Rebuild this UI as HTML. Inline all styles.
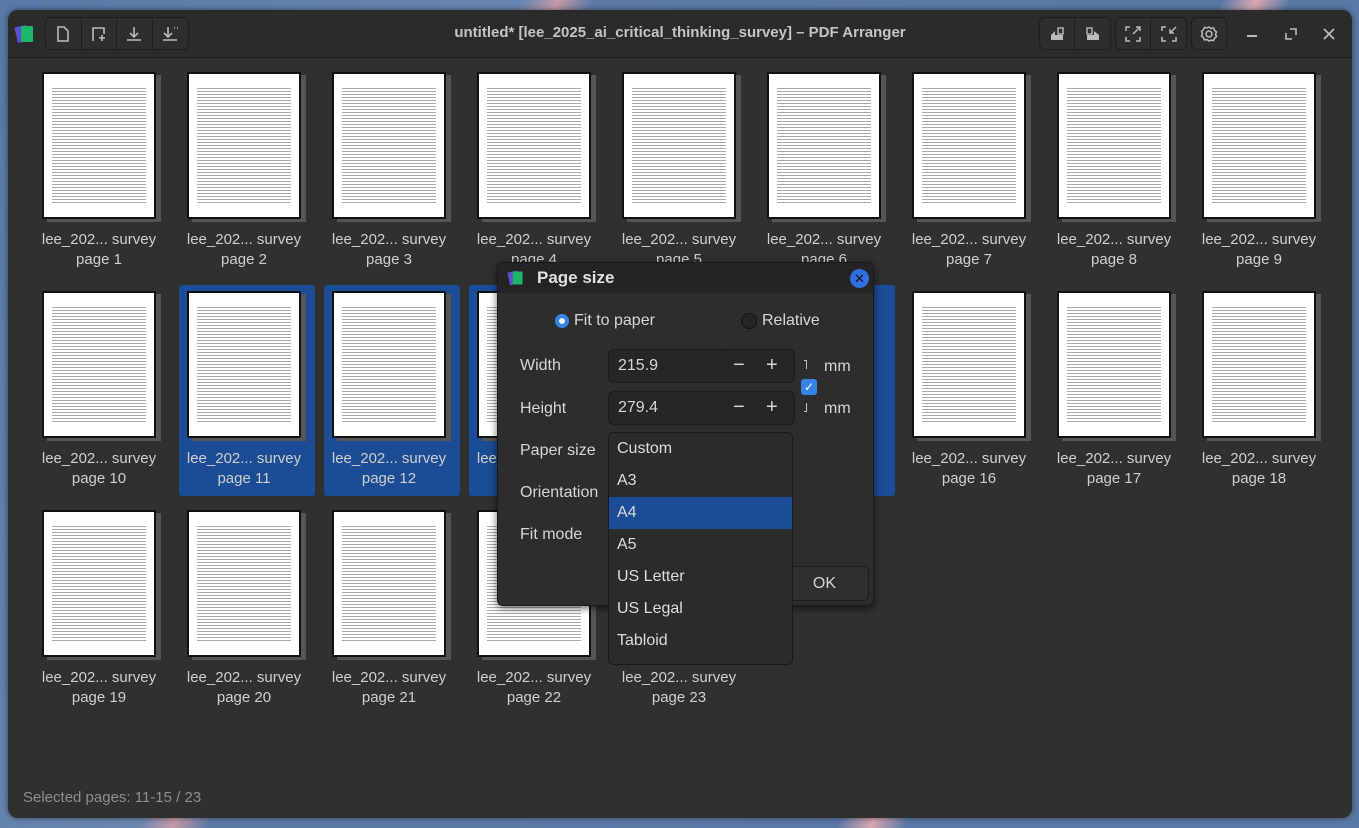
<!DOCTYPE html>
<html><head><meta charset="utf-8"><style>
*{box-sizing:border-box;margin:0;padding:0}
body{width:1359px;height:828px;overflow:hidden;position:relative;font-family:"Liberation Sans","DejaVu Sans",sans-serif;
background:linear-gradient(115deg,#5878a6 0%,#6a86b0 30%,#c49aa8 32%,#5d7aa6 34%,#5a78a5 70%,#d8a8b0 72%,#5a78a5 74%)}
.win{position:absolute;left:8px;top:10px;width:1344px;height:808px;background:#303030;border-radius:10px;overflow:hidden;box-shadow:0 0 6px rgba(0,0,0,.5)}
.hdr{position:absolute;left:0;top:0;width:100%;height:48px;background:#2b2b2b;border-bottom:1px solid #1f1f1f}
.title{position:absolute;left:0;right:0;top:14px;text-align:center;color:#c4c4c4;font-size:15px;font-weight:bold}
.grp{position:absolute;top:7px;height:33px;border:1px solid #1e1e1e;border-radius:6px;background:#2e2e2e;display:flex}
.grp div{width:36px;height:31px;border-right:1px solid #1e1e1e;display:flex;align-items:center;justify-content:center}
.grp div:last-child{border-right:none}
.cell{position:absolute;width:136px;height:211px}
.sel{background:#1b4c95;border-radius:3px}
.pg{position:absolute;left:8px;top:6px;width:114px;height:147px;background:#fff;border:2px solid #111;box-shadow:5px 3px 0 #555}
.pg i{position:absolute;left:8px;right:8px;top:12px;bottom:12px;background:repeating-linear-gradient(#fff 0 2px,#aaa 2px 3px)}
.lbl{position:absolute;left:0;width:130px;top:164px;text-align:center;color:#cfcfcf;font-size:15px;line-height:20px}
.dlg{position:absolute;left:497px;top:262px;width:377px;height:344px;background:#2d2d2d;border:1px solid #1a1a1a;border-radius:6px;box-shadow:0 2px 8px rgba(0,0,0,.6);color:#d6d6d6;font-size:16px}
.dt{height:30px;background:#242424;border-radius:6px 6px 0 0;position:relative}
.t{position:absolute}
.entry{position:absolute;left:110px;width:187px;height:34px;background:#262626;border:1px solid #1c1c1c;border-radius:6px}
.pop{position:absolute;left:608px;top:432px;width:185px;height:233px;background:#2b2b2b;border:1px solid #1a1a1a;border-radius:5px;color:#dcdcdc;font-size:16px}
.pop div{height:32px;line-height:32px;padding-left:8px}
</style></head><body>
<div class="win">
 <div class="hdr">
  <svg style="position:absolute;left:6px;top:13px" width="22" height="22" viewBox="0 0 22 22"><rect x="2" y="3" width="12" height="16" rx="1" fill="#5a4fcf" transform="rotate(-12 8 11)"/><rect x="7" y="3" width="12" height="16" rx="1" fill="#1db56a"/></svg>
  <div class="grp" style="left:37px;width:144px">
   <div><svg width="14" height="16"><path d="M2 1h6l4 4v10H2z" fill="none" stroke="#bbb" stroke-width="1.6"/></svg></div>
   <div><svg width="16" height="16"><path d="M2 15V2h11v6" fill="none" stroke="#bbb" stroke-width="1.6"/><path d="M11 9v6M8 12h6" stroke="#bbb" stroke-width="1.6"/></svg></div>
   <div><svg width="16" height="16"><path d="M8 1v10M4 7l4 4 4-4M1 14h14" fill="none" stroke="#bbb" stroke-width="1.6"/></svg></div>
   <div><svg width="16" height="16"><path d="M6 1v10M2 7l4 4 4-4M1 14h14M12 2h1M15 2h1" fill="none" stroke="#bbb" stroke-width="1.6"/></svg></div>
  </div>
  <div class="title">untitled* [lee_2025_ai_critical_thinking_survey] – PDF Arranger</div>
  <div class="grp" style="left:1031px;width:72px">
   <div><svg width="16" height="16"><path d="M2 14V9l4-4h0v9z" fill="#bbb"/><rect x="9" y="2" width="5" height="6" fill="none" stroke="#bbb" stroke-width="1.4"/><rect x="2" y="9" width="12" height="5" fill="#bbb"/></svg></div>
   <div><svg width="16" height="16"><rect x="2" y="2" width="5" height="6" fill="none" stroke="#bbb" stroke-width="1.4"/><rect x="2" y="9" width="12" height="5" fill="#bbb"/><path d="M9 5l5 4H9z" fill="#bbb"/></svg></div>
  </div>
  <div class="grp" style="left:1107px;width:72px">
   <div><svg width="16" height="16" fill="none" stroke="#bbb" stroke-width="1.5"><path d="M1 5V1h4M15 11v4h-4M1 11v4h4M11 1h4v4M8 8l6-6"/></svg></div>
   <div><svg width="16" height="16" fill="none" stroke="#bbb" stroke-width="1.5"><path d="M1 5V1h4M15 11v4h-4M1 11v4h4M15 1L9 7M9 3v4h4"/></svg></div>
  </div>
  <div class="grp" style="left:1183px;width:36px">
   <div><svg width="18" height="18" fill="none" stroke="#bbb" stroke-width="1.5"><circle cx="9" cy="9" r="3"/><path d="M9 2l2 1.5 2.5-.5 1 2.3 2 1.7-1 2.3 1 2.3-2 1.7-1 2.3-2.5-.5L9 16l-2-1.5-2.5.5-1-2.3-2-1.7 1-2.3-1-2.3 2-1.7 1-2.3 2.5.5z"/></svg></div>
  </div>
  <div style="position:absolute;left:1239px;top:25px;width:10px;height:2px;background:#bbb"></div>
  <svg style="position:absolute;left:1277px;top:18px" width="12" height="12" fill="none" stroke="#bbb" stroke-width="1.6"><path d="M5 1h6v6M1 5v6h6"/></svg>
  <svg style="position:absolute;left:1315px;top:18px" width="12" height="12" stroke="#bbb" stroke-width="1.8"><path d="M1 1l10 10M11 1L1 11"/></svg>
 </div>
</div>
<div id="grid"></div>
<div style="position:absolute;left:23px;top:789px;color:#8e8e8e;font-size:15px">Selected pages: 11-15 / 23</div>

<div class="dlg">
 <div class="dt">
  <svg style="position:absolute;left:9px;top:6px" width="18" height="18" viewBox="0 0 22 22"><rect x="2" y="3" width="12" height="16" rx="1" fill="#5a4fcf" transform="rotate(-12 8 11)"/><rect x="7" y="3" width="12" height="16" rx="1" fill="#1db56a"/></svg>
  <div class="t" style="left:39px;top:5px;font-weight:bold;color:#e0e0e0;font-size:17px">Page size</div>
  <div style="position:absolute;left:352px;top:6px;width:19px;height:19px;border-radius:50%;background:#2f6fe0;color:#111;font-size:13px;font-weight:bold;text-align:center;line-height:19px">✕</div>
 </div>
 <div style="position:absolute;left:57px;top:51px;width:14px;height:14px;border-radius:50%;background:#3584e4;border:4px solid #3584e4;box-shadow:inset 0 0 0 3px #fff"></div>
 <div class="t" style="left:76px;top:49px">Fit to paper</div>
 <div style="position:absolute;left:243px;top:50px;width:16px;height:16px;border-radius:50%;border:1.5px solid #111;background:#252525"></div>
 <div class="t" style="left:264px;top:49px">Relative</div>
 <div class="t" style="left:22px;top:94px">Width</div>
 <div class="entry" style="top:86px"><span class="t" style="left:9px;top:7px">215.9</span><span style="position:absolute;left:113px;top:0;width:1px;height:32px;background:#222"></span><span class="t" style="left:124px;top:4px;font-size:20px">−</span><span class="t" style="left:157px;top:4px;font-size:20px">+</span></div>
 <div class="t" style="left:22px;top:137px">Height</div>
 <div class="entry" style="top:128px"><span class="t" style="left:9px;top:7px">279.4</span><span style="position:absolute;left:113px;top:0;width:1px;height:32px;background:#222"></span><span class="t" style="left:124px;top:4px;font-size:20px">−</span><span class="t" style="left:157px;top:4px;font-size:20px">+</span></div>
 <div class="t" style="left:305px;top:94px;font-size:13px">˥</div>
 <div class="t" style="left:305px;top:137px;font-size:13px">˩</div>
 <div style="position:absolute;left:303px;top:116px;width:16px;height:16px;border-radius:3px;background:#3584e4;color:#fff;font-size:12px;text-align:center;line-height:16px;font-weight:bold">✓</div>
 <div class="t" style="left:326px;top:95px">mm</div>
 <div class="t" style="left:326px;top:137px">mm</div>
 <div class="t" style="left:22px;top:179px">Paper size</div>
 <div class="t" style="left:22px;top:221px">Orientation</div>
 <div class="t" style="left:22px;top:263px">Fit mode</div>
 <div style="position:absolute;left:285px;top:303px;width:86px;height:35px;border:1px solid #1c1c1c;border-radius:5px;background:#2f2f2f;text-align:right;padding-right:32px;line-height:33px">OK</div>
</div>
<div class="pop">
 <div>Custom</div><div>A3</div><div style="background:#1b4c95">A4</div><div>A5</div><div>US Letter</div><div>US Legal</div><div>Tabloid</div>
</div>
<script>
var g=document.getElementById('grid'),h='';
for(var n=1;n<=23;n++){var r=Math.floor((n-1)/9),c=(n-1)%9;
 var x=34+c*145,y=66+r*219;
 if(n>=14&&n<=15)continue;
 var s=(n>=11&&n<=15)?' sel':'';
 h+='<div class="cell'+s+'" style="left:'+x+'px;top:'+y+'px"><div class="pg"><i></i></div><div class="lbl">lee_202... survey<br>page '+n+'</div></div>';}
h+='<div class="cell sel" style="left:759px;top:285px"></div>';
g.innerHTML=h;
</script>
</body></html>
